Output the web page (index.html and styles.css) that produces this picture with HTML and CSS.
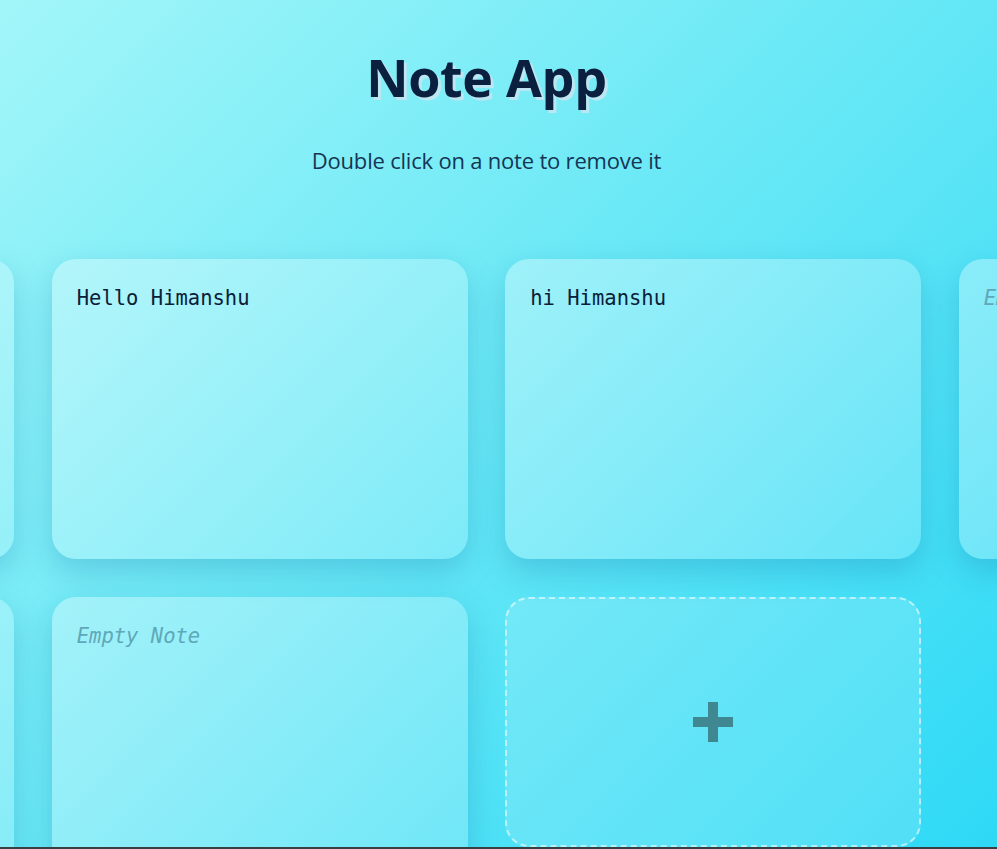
FILE: index.html
```html
<!DOCTYPE html>
<html lang="en">
<head>
<meta charset="utf-8">
<title>Note App</title>
<link rel="stylesheet" href="styles.css">
</head>
<body>
<div class="app">
  <header class="header">
    <h1 class="title">Note App</h1>
    <p class="subtitle">Double click on a note to remove it</p>
  </header>
  <main class="notes">
    <textarea class="note" placeholder="Empty Note"></textarea>
    <textarea class="note">Hello Himanshu</textarea>
    <textarea class="note">hi Himanshu</textarea>
    <textarea class="note" placeholder="Empty Note"></textarea>
    <textarea class="note" placeholder="Empty Note"></textarea>
    <textarea class="note" placeholder="Empty Note"></textarea>
    <button class="add-btn" type="button" aria-label="Add note">
      <svg class="plus" width="40" height="40" viewBox="0 0 40 40" aria-hidden="true">
        <rect x="0" y="15" width="40" height="10"/>
        <rect x="15" y="0" width="10" height="40"/>
      </svg>
    </button>
  </main>
</div>
</body>
</html>
```
FILE: styles.css
```css
* { box-sizing: border-box; }

html, body {
  margin: 0;
  padding: 0;
  height: 100%;
}

body {
  overflow: hidden;
  background: linear-gradient(135deg, #a2f6f9 0%, #6ce9f6 45%, #2ed9f6 100%);
  font-family: "Open Sans", "Noto Sans", sans-serif;
}

body::after {
  content: "";
  position: fixed;
  left: 0;
  right: 0;
  bottom: 0;
  height: 2px;
  background: #3a3f44;
}

.app {
  width: calc(100% - 24px);
}

.header {
  text-align: center;
  padding-top: 41px;
}

.title {
  margin: 0;
  font-size: 52px;
  font-weight: 700;
  line-height: 72px;
  color: #0b1f3e;
  text-shadow: 3px 3px 0 #bce6f2;
  letter-spacing: -0.3px;
}

.subtitle {
  margin: 32px 0 0;
  font-size: 22px;
  line-height: 30px;
  color: #153553;
  letter-spacing: -0.2px;
}

.notes {
  margin-top: 84px;
  display: grid;
  grid-template-columns: repeat(4, 416px);
  gap: 38px 37.5px;
  justify-content: center;
  align-items: start;
}

.note {
  display: block;
  width: 416px;
  height: 300px;
  border: none;
  border-radius: 24px;
  padding: 25px;
  resize: none;
  outline: none;
  font-family: "DejaVu Sans Mono", "Liberation Mono", monospace;
  font-size: 20.5px;
  line-height: 28px;
  color: #0a2038;
  background: linear-gradient(135deg, rgba(255,255,255,0.32), rgba(255,255,255,0.18));
  box-shadow: 0 12px 30px rgba(20, 120, 170, 0.28);
}

.note::placeholder {
  color: #5fa8b8;
  font-style: italic;
}

.add-btn {
  display: flex;
  align-items: center;
  justify-content: center;
  width: 416px;
  height: 250px;
  border: 2px dashed rgba(255,255,255,0.55);
  border-radius: 24px;
  background: rgba(255,255,255,0.15);
  padding: 0;
  cursor: pointer;
}

.plus {
  display: block;
  flex: none;
  fill: #3f8891;
}
```
